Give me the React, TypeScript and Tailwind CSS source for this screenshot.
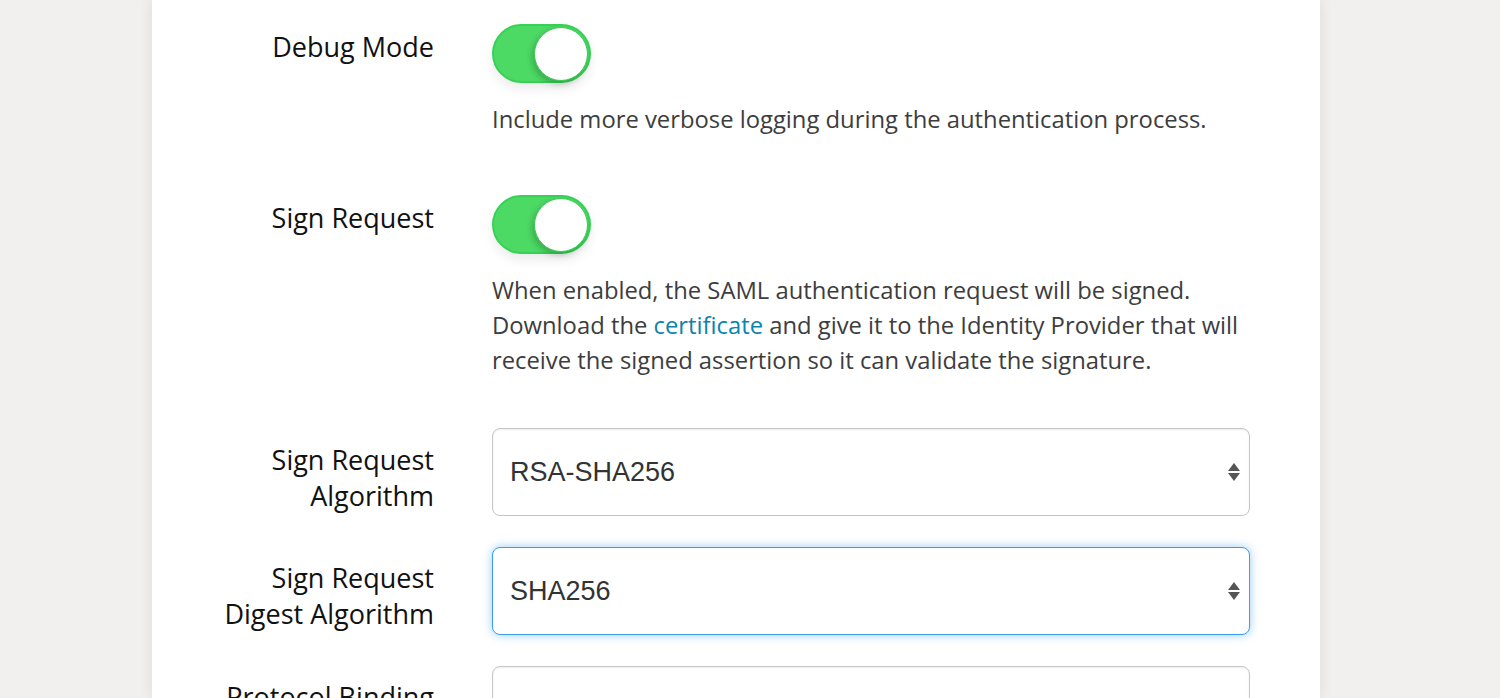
import React from 'react';

const labelFont = { fontFamily: '"Open Sans", "Noto Sans", sans-serif' };
const bodyFont = { fontFamily: '"Liberation Sans", Arial, sans-serif' };
const descFont = { fontFamily: '"Open Sans", "Noto Sans", sans-serif' };

function Toggle() {
  return (
    <div className="flex h-[59px] w-[99px] items-center justify-end rounded-full border-2 border-[#36d256] bg-[#4cd964] pr-[1px] shadow-[0_6px_12px_rgba(0,0,0,0.08)]">
      <div className="h-[54px] w-[54px] rounded-full border border-[#3bc957] bg-white shadow-[-2px_3px_6px_rgba(0,0,0,0.22)]" />
    </div>
  );
}

function Arrows() {
  return (
    <svg width="12" height="20" viewBox="0 0 12 20" className="text-[#555]">
      <path d="M6 1 L12 9 L0 9 Z" fill="currentColor" />
      <path d="M0 11 L12 11 L6 19 Z" fill="currentColor" />
    </svg>
  );
}

function Select({ value, focused }: { value: string; focused?: boolean }) {
  return (
    <div
      className={
        'flex h-[88px] w-[758px] items-center justify-between rounded-lg bg-white pl-[17px] pr-[9px] ' +
        (focused
          ? 'border border-[#3b9de9] shadow-[0_0_10px_rgba(74,163,237,0.55)]'
          : 'border border-[#c6c6c6] shadow-[inset_0_1px_2px_rgba(0,0,0,0.08)]')
      }
    >
      <span className="text-[27px] text-[#333]" style={bodyFont}>{value}</span>
      <Arrows />
    </div>
  );
}

function Label({ children, pad }: { children: React.ReactNode; pad: string }) {
  return (
    <div className={'w-[241px] shrink-0 text-right text-[27px] font-medium leading-[36px] text-[#111] ' + pad} style={labelFont}>
      {children}
    </div>
  );
}

export default function App() {
  return (
    <div className="flex h-[698px] justify-center overflow-hidden bg-[#f1f0ef]">
      <div className="ml-[-28px] w-[1168px] bg-white pl-[41px] pt-[24px] shadow-[0_0_14px_rgba(0,0,0,0.09)]">
        {/* Debug Mode */}
        <div className="flex items-start">
          <Label pad="pt-[5px]">Debug Mode</Label>
          <div className="ml-[58px]">
            <Toggle />
            <p className="mt-[19px] text-[23.8px] leading-[35px] text-[#3d3d3d]" style={descFont}>
              Include more verbose logging during the authentication process.
            </p>
          </div>
        </div>

        {/* Sign Request */}
        <div className="mt-[58px] flex items-start">
          <Label pad="pt-[5px]">Sign Request</Label>
          <div className="ml-[58px]">
            <Toggle />
            <p className="mt-[19px] text-[23.8px] leading-[35px] text-[#3d3d3d]" style={descFont}>
              When enabled, the SAML authentication request will be signed.
              <br />
              Download the <a className="text-[#0a84ae]">certificate</a> and give it to the Identity Provider that will
              <br />
              receive the signed assertion so it can validate the signature.
            </p>
          </div>
        </div>

        <div className="mt-[50px] flex items-start">
          <Label pad="pt-[14px]">
            Sign Request
            <br />
            Algorithm
          </Label>
          <div className="ml-[58px]">
            <Select value="RSA-SHA256" />
          </div>
        </div>

        <div className="mt-[31px] flex items-start">
          <Label pad="pt-[13px]">
            Sign Request
            <br />
            Digest Algorithm
          </Label>
          <div className="ml-[58px]">
            <Select value="SHA256" focused />
          </div>
        </div>

        <div className="mt-[31px] flex items-start">
          <Label pad="pt-[13px]">Protocol Binding</Label>
          <div className="ml-[58px]">
            <Select value="" />
          </div>
        </div>
      </div>
    </div>
  );
}
